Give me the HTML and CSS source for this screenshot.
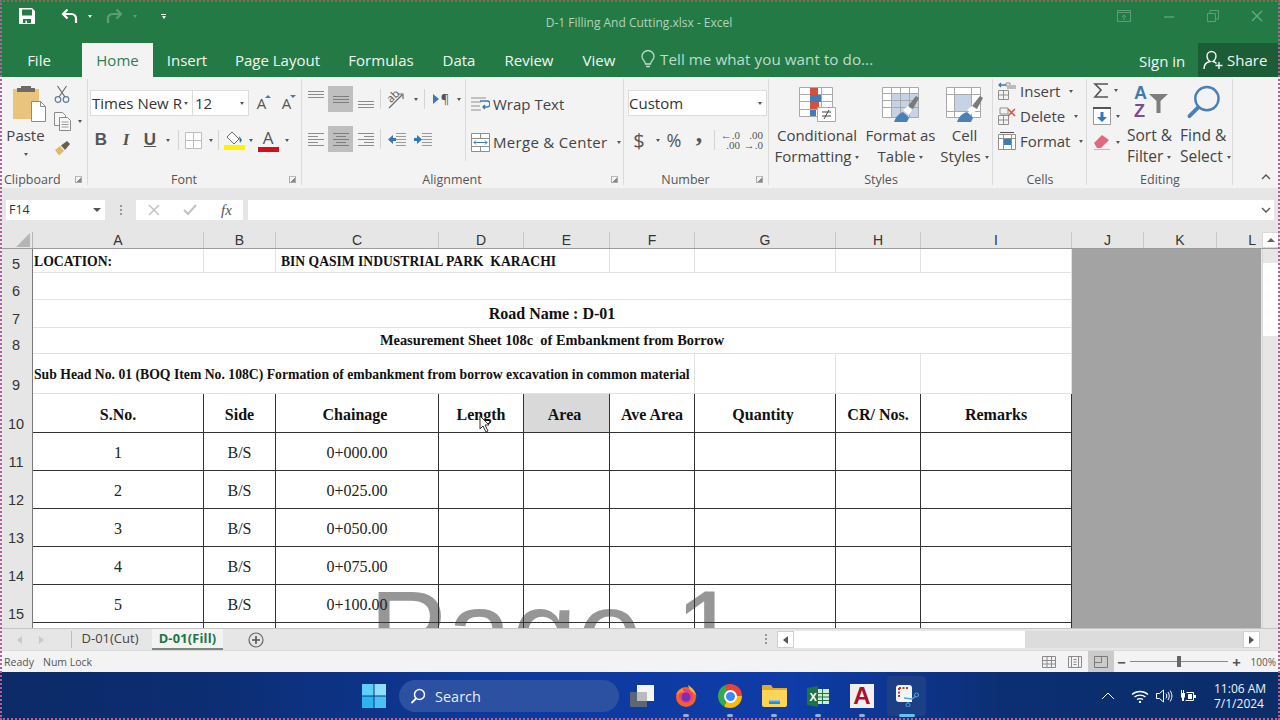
FILE: index.html
```html
<!DOCTYPE html>
<html lang="en">
<head>
<meta charset="utf-8">
<title>D-1 Filling And Cutting.xlsx - Excel</title>
<link rel="stylesheet" href="styles.css">
</head>
<body>
<div class="app">
  <header class="titlebar">
    <div class="qat">
      <svg class="i-save" width="18" height="18" viewBox="0 0 18 18"><path fill="#fff" fill-rule="evenodd" d="M1 1h13l3 3v13H1zM4 2.500v6h10v-6zM5 12v4h2.500v-2.500H9V16h4v-4z"/></svg>
      <svg class="i-undo" width="17" height="16" viewBox="0 0 17 16"><path fill="none" stroke="#fff" stroke-width="2.200" d="M6.500 1.500 2 6l4.500 4.500M2 6h8.500a4.500 4.500 0 0 1 4.500 4.500V15"/></svg>
      <span class="caret white c-undo"></span>
      <svg class="i-redo" width="17" height="16" viewBox="0 0 17 16"><path fill="none" stroke="#5c9e76" stroke-width="2.200" d="M10.500 1.500 15 6l-4.500 4.500M15 6H6.500A4.500 4.500 0 0 0 2 10.500V15"/></svg>
      <span class="caret dim c-redo"></span>
      <span class="qat-more"><span class="bar"></span><span class="caret white"></span></span>
    </div>
    <div class="doc-title">D-1 Filling And Cutting.xlsx - Excel</div>
    <div class="win-btns">
      <svg width="14" height="12" viewBox="0 0 14 12"><path fill="none" stroke="#5d9f77" d="M.5.500h13v11H.5zM.5 2.500h13M7 10V5M5 7l2-2 2 2"/></svg>
      <svg width="12" height="12" viewBox="0 0 12 12"><path stroke="#5d9f77" stroke-width="1.500" d="M1 7h10"/></svg>
      <svg width="12" height="12" viewBox="0 0 12 12"><path fill="none" stroke="#5d9f77" d="M.5 3.500h8v8h-8zM3 3V.5h8.500V9H9"/></svg>
      <svg width="12" height="12" viewBox="0 0 12 12"><path stroke="#6aa983" stroke-width="1.300" d="M1 1l10 10M11 1 1 11"/></svg>
    </div>
  </header>

  <nav class="tabbar">
    <span class="tab t-file">File</span>
    <span class="tab t-home">Home</span>
    <span class="tab t-insert">Insert</span>
    <span class="tab t-layout">Page Layout</span>
    <span class="tab t-formulas">Formulas</span>
    <span class="tab t-data">Data</span>
    <span class="tab t-review">Review</span>
    <span class="tab t-view">View</span>
    <span class="tell">
      <svg width="14" height="19" viewBox="0 0 14 19"><path fill="none" stroke="#bcdac8" stroke-width="1.300" d="M4.500 14c0-3-3.500-4-3.500-7.500a6 6 0 0 1 12 0C13 10 9.500 11 9.500 14zM5 16.500h4"/></svg>
      Tell me what you want to do...
    </span>
    <span class="signin">Sign in</span>
    <span class="share">
      <svg width="20" height="20" viewBox="0 0 20 20"><path fill="none" stroke="#fff" stroke-width="1.300" d="M1 19c0-5 3-7 6-7.500C4.500 10 4 8 4 6a4.500 4.500 0 0 1 9 0c0 2-1 4-3 5.500 1.500.3 2.500 1 3.500 2M16 12v7M12.500 15.500h7"/></svg>
      Share
    </span>
  </nav>

  <section class="ribbon">
    <div class="group g-clip">
      <div class="group-body">
        <div class="paste">
          <svg width="35" height="38" viewBox="0 0 35 38"><path fill="#e9c47c" d="M1 5h26v30H1z"/><path fill="#6f6a66" d="M9 2h10v2h4v4H5V4h4z"/><path fill="#fff" stroke="#8a8a8a" d="M19.500 17.500h9l5 5v15h-14z"/><path fill="none" stroke="#8a8a8a" d="M28.500 17.500v5h5"/></svg>
          <span class="big-label">Paste</span>
          <span class="caret"></span>
        </div>
        <div class="clip-tools">
          <svg width="16" height="18" viewBox="0 0 16 18"><g fill="none" stroke="#5c7d9c" stroke-width="1.200"><circle cx="4" cy="14.500" r="2.800"/><circle cx="12" cy="14.500" r="2.800"/></g><path stroke="#6b6b6b" stroke-width="1.200" d="M5 12 12.500 1M11 12 3.500 1"/></svg>
          <span class="copy-row"><svg width="17" height="19" viewBox="0 0 17 19"><g fill="#f7f7f7" stroke="#8a8a8a"><path d="M.5.500h8l3 3v10H.5z"/><path d="M5.500 5.500h8l3 3v10h-11z"/></g><path stroke="#9a9a9a" d="M7.500 10h7M7.500 12.500h7M7.500 15h7"/></svg><span class="caret"></span></span>
          <svg width="17" height="15" viewBox="0 0 17 15"><path fill="#e3b968" d="M1 9l5-4 4 5-5 4.500z"/><path fill="#6b5d4b" d="M7 4.500 13 0l3 3-5 6z"/></svg>
        </div>
      </div>
      <div class="group-label left">Clipboard<span class="launcher"></span></div>
    </div>

    <div class="group g-font">
      <div class="group-body col">
        <div class="row r1">
          <span class="field f-name">Times New R<span class="caret"></span></span>
          <span class="field f-size">12<span class="caret"></span></span>
          <span class="tool w25"><span class="grow-a">A<i class="up"></i></span></span>
          <span class="tool w25"><span class="grow-a small">A<i class="down"></i></span></span>
        </div>
        <div class="row r2">
          <span class="tool w22 fmt b">B</span>
          <span class="tool w28 fmt it">I</span>
          <span class="tool w20 fmt u">U</span>
          <span class="tool w16"><span class="caret"></span></span>
          <span class="sep"></span>
          <span class="tool w25"><svg width="17" height="17" viewBox="0 0 17 17"><path fill="#fff" stroke="#bdbdbd" d="M.5.500h16v16H.5zM8.500.500v16M.5 8.500h16"/></svg></span>
          <span class="tool w10"><span class="caret"></span></span>
          <span class="sep"></span>
          <span class="tool w26 stack"><svg width="20" height="14" viewBox="0 0 20 14"><path fill="#fff" stroke="#6b6b6b" d="M8 1l7 7-5 5-7-7z"/><path fill="#1f6fb0" d="M15 5l3 4-2 3z"/></svg><i class="swatch yellow"></i></span>
          <span class="tool w8"><span class="caret"></span></span>
          <span class="tool w26 stack"><span class="color-a">A</span><i class="swatch red"></i></span>
          <span class="tool w12"><span class="caret"></span></span>
        </div>
      </div>
      <div class="group-label off">Font<span class="launcher"></span></div>
    </div>

    <div class="group g-align">
      <div class="group-body">
        <div class="col align-col">
          <div class="row a1">
            <span class="tool w25"><svg width="16" height="22" viewBox="0 0 16 22"><path stroke="#8c8c8c" d="M0 3.500h16M0 6.500h16M0 9.500h16"/></svg></span>
            <span class="tool w25 on"><svg width="16" height="9" viewBox="0 0 16 9"><path stroke="#7d7d7d" d="M0 1.500h16M0 4.500h16M0 7.500h16"/></svg></span>
            <span class="tool w25"><svg width="16" height="22" viewBox="0 0 16 22"><path stroke="#8c8c8c" d="M0 13.500h16M0 16.500h16M0 19.500h16"/></svg></span>
            <span class="sep wide"></span>
            <span class="tool w26"><svg width="20" height="19" viewBox="0 0 20 19"><path fill="none" stroke="#6a6a6a" stroke-width="1.200" d="M2 18 15 5M11 4h5v5"/></svg><span class="ab">ab</span></span>
            <span class="tool w12"><span class="caret"></span></span>
            <span class="sep"></span>
            <span class="tool w26 pil"><svg width="10" height="10" viewBox="0 0 10 10"><path fill="#3f7ab0" d="M2 0l6 5-6 5z"/></svg>¶</span>
            <span class="tool w12"><span class="caret"></span></span>
          </div>
          <div class="row a2">
            <span class="tool w25"><svg width="16" height="13" viewBox="0 0 16 13"><path stroke="#8c8c8c" d="M0 .5h16M0 3.500h10M0 6.500h16M0 9.500h10M0 12.500h16"/></svg></span>
            <span class="tool w25 on"><svg width="16" height="13" viewBox="0 0 16 13"><path stroke="#7d7d7d" d="M0 .5h16M3 3.500h10M0 6.500h16M3 9.500h10M0 12.500h16"/></svg></span>
            <span class="tool w25"><svg width="16" height="13" viewBox="0 0 16 13"><path stroke="#8c8c8c" d="M0 .5h16M6 3.500h10M0 6.500h16M6 9.500h10M0 12.500h16"/></svg></span>
            <span class="sep wide"></span>
            <span class="tool w26"><svg width="18" height="13" viewBox="0 0 18 13"><path stroke="#9a9a9a" d="M8 .5h10M8 3.500h10M8 6.500h10M8 9.500h10M8 12.500h10"/><path fill="#2f78b8" d="M0 6.500 5 2v3h3v3H5v3z"/></svg></span>
            <span class="tool w26"><svg width="18" height="13" viewBox="0 0 18 13"><path stroke="#9a9a9a" d="M8 .5h10M8 3.500h10M8 6.500h10M8 9.500h10M8 12.500h10"/><path fill="#2f78b8" d="M8 6.500 3 2v3H0v3h3v3z"/></svg></span>
          </div>
        </div>
        <div class="col wrap-col">
          <div class="cmd"><svg width="19" height="15" viewBox="0 0 19 15"><path stroke="#8f8f8f" d="M0 1h15M0 5h10M0 9h9M0 13h10"/><path fill="none" stroke="#3f7ab0" stroke-width="1.500" d="M9 4h7a2.500 2.500 0 0 1 0 6h-4M14 8l-2 2 2 2"/></svg>Wrap Text</div>
          <div class="cmd merge"><svg width="19" height="19" viewBox="0 0 19 19"><path fill="#fff" stroke="#8f8f8f" d="M.5.500h18v18H.5zM.5 5.500h18M.5 13.500h18M9.500.5v5M9.500 13.500v5"/><path fill="none" stroke="#3f7ab0" d="M3 9.500h13M5 7.500l-2 2 2 2M14 7.500l2 2-2 2"/></svg>Merge &amp; Center<span class="caret"></span></div>
        </div>
      </div>
      <div class="group-label off">Alignment<span class="launcher"></span></div>
    </div>

    <div class="group g-num">
      <div class="group-body col">
        <div class="row r1"><span class="field f-num">Custom<span class="caret"></span></span></div>
        <div class="row r2 num-tools">
          <span class="tool w18 dollar">$</span>
          <span class="tool w20"><span class="caret"></span></span>
          <span class="tool w12 pct">%</span>
          <span class="tool w26 comma">,</span>
          <span class="sep"></span>
          <span class="dec"><i>←.0</i><i>.00</i></span>
          <span class="dec"><i>.00</i><i>→.0</i></span>
        </div>
      </div>
      <div class="group-label off">Number<span class="launcher"></span></div>
    </div>

    <div class="group g-styles">
      <div class="group-body">
        <div class="big b-cond">
          <svg width="39" height="37" viewBox="0 0 39 37"><path fill="#fff" stroke="#a9a9a9" d="M1.500 1.500h33v29h-33zM1.500 8.500h33M1.500 15.500h33M1.500 23.500h33M12.500 1.500v29M23.500 1.500v29"/><path fill="#d3503f" d="M12 2h8v7h-8zM12 16h9v7h-9z"/><path fill="#3f7db8" d="M12 9h11v7H12zM12 24h6v6h-6z"/><path fill="#fff" stroke="#a9a9a9" d="M19.500 21.500h18v14h-18z"/><path fill="none" stroke="#444" d="M24 26h9M24 30h9M31 24l-5 9"/></svg>
          <span class="big-label">Conditional</span>
          <span class="big-label">Formatting <span class="caret"></span></span>
        </div>
        <div class="big b-table">
          <svg width="39" height="37" viewBox="0 0 39 37"><path fill="#fff" stroke="#a9a9a9" d="M1.500 1.500h36v30h-36z"/><path fill="#c5d3e4" d="M10 7h27v24H10z"/><path fill="none" stroke="#a9a9a9" d="M1.500 7.500h36M1.500 14.500h36M1.500 21.500h36M10.500 1.500v30M19.500 1.500v30M28.500 1.500v30"/><path fill="#7a7a7a" d="M27 20 35 10l3 2-6 11z"/><path fill="#fff" d="M22 24l5-4 4 4-3 5z"/><path fill="#4a80b8" d="M13 36c2-6 6-9 9-10 2 2 5 4 6 6l-2 4z"/></svg>
          <span class="big-label">Format as</span>
          <span class="big-label">Table <span class="caret"></span></span>
        </div>
        <div class="big b-cell">
          <svg width="39" height="37" viewBox="0 0 39 37"><path fill="#fff" stroke="#a9a9a9" d="M1.500 1.500h34v30h-34z"/><path fill="#c5d3e4" d="M9 9h17v16H9z"/><path fill="none" stroke="#a9a9a9" d="M1.500 8.500h34M1.500 25.500h34M9.500 1.500v30M26.500 1.500v30"/><path fill="#7a7a7a" d="M27 20 35 10l3 2-6 11z"/><path fill="#fff" d="M22 24l5-4 4 4-3 5z"/><path fill="#4a80b8" d="M12 36c2-6 6-9 10-10 2 2 5 4 6 6l-2 4z"/></svg>
          <span class="big-label">Cell</span>
          <span class="big-label">Styles <span class="caret"></span></span>
        </div>
      </div>
      <div class="group-label">Styles</div>
    </div>

    <div class="group g-cells">
      <div class="group-body col cells-col">
        <div class="cmd cell-cmd"><svg width="18" height="18" viewBox="0 0 18 18"><path fill="none" stroke="#8f8f8f" d="M.5 8.500h10v9H.5zM5.500 8.500v9M.5 13h10M8 1h4v3H8z"/><path fill="#bcbcbc" d="M9 3h9v4H9z"/><path fill="none" stroke="#3f7ab0" stroke-width="1.300" d="M8 3H1M3 1 1 3l2 2"/></svg>Insert<span class="caret"></span></div>
        <div class="cmd cell-cmd"><svg width="18" height="18" viewBox="0 0 18 18"><path fill="none" stroke="#8f8f8f" d="M.5 8.500h10v9H.5zM5.500 8.500v9M.5 13h10M2 1h8v6H2z"/><path stroke="#d3503f" stroke-width="1.500" d="M10 2l7 7M17 2l-7 7"/></svg>Delete<span class="caret"></span></div>
        <div class="cmd cell-cmd"><svg width="18" height="18" viewBox="0 0 18 18"><path fill="#fff" stroke="#8f8f8f" d="M.5 2.500h17v15H.5zM.5 6.500h17M5.500 2.500v15M13.500 2.500v15"/><path fill="#3f7ab0" d="M6 7h7v6H6z"/><path stroke="#555" d="M2 .5h14"/></svg>Format<span class="caret"></span></div>
      </div>
      <div class="group-label">Cells</div>
    </div>

    <div class="group g-edit">
      <div class="group-body">
        <div class="col edit-col">
          <span class="edit-tool"><svg width="16" height="15" viewBox="0 0 16 15"><path fill="none" stroke="#555" stroke-width="1.600" d="M15 1H2l6 6-6 7h13"/></svg><span class="caret"></span></span>
          <span class="edit-tool"><svg width="18" height="18" viewBox="0 0 18 18"><path fill="#fff" stroke="#9a9a9a" d="M.5.500h17v17H.5z"/><path fill="#555" d="M0 0h18v2H0z"/><path fill="#2f78b8" d="M7.500 5h3v5H14l-5 5-5-5h3.500z"/></svg><span class="caret"></span></span>
          <span class="edit-tool"><svg width="18" height="16" viewBox="0 0 18 16"><path fill="#e0697f" d="M1 9l8-8 7 5-8 8H4z"/><path stroke="#bcbcbc" d="M1 15.500h16"/></svg><span class="caret"></span></span>
        </div>
        <div class="big b-sort">
          <svg width="36" height="34" viewBox="0 0 36 34"><text class="svgtxt az" x="1" y="14" fill="#3f7ab0">A</text><text class="svgtxt az" x="1" y="32" fill="#7a4b9a">Z</text><path fill="#7d7d7d" d="M16 9h19l-7.500 7v12h-4V16z"/></svg>
          <span class="big-label">Sort &amp;</span>
          <span class="big-label">Filter <span class="caret"></span></span>
        </div>
        <div class="big b-find">
          <svg width="36" height="35" viewBox="0 0 36 35"><circle cx="21" cy="14" r="12" fill="none" stroke="#4a80b8" stroke-width="2.500"/><path stroke="#4a80b8" stroke-width="4" stroke-linecap="round" d="M12 23 3 32"/></svg>
          <span class="big-label">Find &amp;</span>
          <span class="big-label">Select <span class="caret"></span></span>
        </div>
      </div>
      <div class="group-label">Editing</div>
    </div>
    <div class="collapse"><svg width="10" height="6" viewBox="0 0 10 6"><path fill="none" stroke="#555" stroke-width="1.400" d="M1 5l4-4 4 4"/></svg></div>
  </section>

  <section class="formula">
    <div class="namebox">F14<span class="caret dark"></span></div>
    <div class="fdots"></div>
    <div class="fxbox">
      <svg width="12" height="12" viewBox="0 0 12 12"><path stroke="#c2c2c2" stroke-width="1.500" d="M1 1l10 10M11 1 1 11"/></svg>
      <svg width="14" height="12" viewBox="0 0 14 12"><path fill="none" stroke="#c2c2c2" stroke-width="2" d="M1 6l4 4 8-9"/></svg>
      <span class="fx">fx</span>
    </div>
    <div class="finput"><svg width="10" height="6" viewBox="0 0 10 6"><path fill="none" stroke="#555" stroke-width="1.400" d="M1 1l4 4 4-4"/></svg></div>
  </section>

  <div class="colheads">
    <span class="corner"><i></i></span>
    <span class="ch w-a">A</span><span class="ch w-b">B</span><span class="ch w-c">C</span><span class="ch w-d">D</span><span class="ch w-e">E</span><span class="ch w-f">F</span><span class="ch w-g">G</span><span class="ch w-h">H</span><span class="ch w-i">I</span><span class="ch w-j">J</span><span class="ch w-k">K</span><span class="ch w-l">L</span>
    <span class="sb-up"><i></i></span>
  </div>

  <main class="sheet">
    <div class="pagearea">
      <div class="watermark">Page 1</div>
      <div class="grid">
        <div class="rn">5</div><div class="c t13">LOCATION:</div><div class="c"></div><div class="c s3 t13 ind">BIN QASIM INDUSTRIAL PARK  KARACHI</div><div class="c"></div><div class="c"></div><div class="c"></div><div class="c"></div>
        <div class="rn">6</div><div class="c s9"></div>
        <div class="rn">7</div><div class="c s9 ctr t16">Road Name : D-01</div>
        <div class="rn">8</div><div class="c s9 ctr t14">Measurement Sheet 108c  of Embankment from Borrow</div>
        <div class="rn">9</div><div class="c s6 t13">Sub Head No. 01 (BOQ Item No. 108C) Formation of embankment from borrow excavation in common material</div><div class="c"></div><div class="c"></div><div class="c"></div>

        <div class="rn">10</div><div class="d h">S.No.</div><div class="d h">Side</div><div class="d h ch-l">Chainage</div><div class="d h">Length</div><div class="d h shade ch-l">Area</div><div class="d h">Ave Area</div><div class="d h ch-l">Quantity</div><div class="d h">CR/ Nos.</div><div class="d h">Remarks</div>
        <div class="rn">11</div><div class="d">1</div><div class="d">B/S</div><div class="d">0+000.00</div><div class="d"></div><div class="d"></div><div class="d"></div><div class="d"></div><div class="d"></div><div class="d"></div>
        <div class="rn">12</div><div class="d">2</div><div class="d">B/S</div><div class="d">0+025.00</div><div class="d"></div><div class="d"></div><div class="d"></div><div class="d"></div><div class="d"></div><div class="d"></div>
        <div class="rn">13</div><div class="d">3</div><div class="d">B/S</div><div class="d">0+050.00</div><div class="d"></div><div class="d"></div><div class="d"></div><div class="d"></div><div class="d"></div><div class="d"></div>
        <div class="rn">14</div><div class="d">4</div><div class="d">B/S</div><div class="d">0+075.00</div><div class="d"></div><div class="d"></div><div class="d"></div><div class="d"></div><div class="d"></div><div class="d"></div>
        <div class="rn">15</div><div class="d">5</div><div class="d">B/S</div><div class="d">0+100.00</div><div class="d"></div><div class="d"></div><div class="d"></div><div class="d"></div><div class="d"></div><div class="d"></div>
        <div class="rn"></div><div class="d"></div><div class="d"></div><div class="d"></div><div class="d"></div><div class="d"></div><div class="d"></div><div class="d"></div><div class="d"></div><div class="d"></div>
      </div>
    </div>
    <div class="graypane"></div>
    <div class="vscroll"><div class="vthumb"></div></div>
    <svg class="cursor" width="13" height="18" viewBox="0 0 13 18"><path fill="#fff" stroke="#333" d="M1 1v13l3-3 3 6 2-1-3-6h4z"/></svg>
  </main>

  <div class="sheettabs">
    <span class="nav-arrows"><i class="al"></i><i class="ar"></i></span>
    <span class="stab">D-01(Cut)</span>
    <span class="stab active">D-01(Fill)</span>
    <svg class="addtab" width="16" height="16" viewBox="0 0 16 16"><circle cx="8" cy="8" r="7" fill="none" stroke="#666" stroke-width="1.200"/><path stroke="#555" stroke-width="1.600" d="M4 8h8M8 4v8"/></svg>
    <span class="hdots"></span>
    <div class="hscroll"><span class="hb"><i class="al dark"></i></span><span class="hthumb"></span><span class="hb end"><i class="ar dark"></i></span></div>
  </div>

  <footer class="status">
    <span class="st-ready">Ready</span><span>Num Lock</span>
    <div class="st-right">
      <span class="vw"><svg width="14" height="12" viewBox="0 0 14 12"><path fill="none" stroke="#8a8a8a" d="M.5.500h13v11H.5zM.5 4.500h13M.5 8h13M5 .5v11M9.500.5v11"/></svg></span>
      <span class="vw"><svg width="14" height="12" viewBox="0 0 14 12"><path fill="none" stroke="#8a8a8a" d="M.5.500h13v11H.5zM3.500.5v11M10.500.5v11M5.500 3.500h3M5.500 6h3M5.500 8.500h3"/></svg></span>
      <span class="vw on"><svg width="14" height="12" viewBox="0 0 14 12"><path fill="none" stroke="#7a7a7a" d="M.5.500h13v11H.5zM7.500.5v6h-7"/></svg></span>
      <span class="zm">−</span>
      <span class="slider"><i></i></span>
      <span class="zm plus">+</span>
      <span class="zoomv">100%</span>
    </div>
  </footer>

  <div class="taskbar">
    <svg class="winlogo" width="24" height="24" viewBox="0 0 24 24"><path fill="#5ed0f5" d="M0 0h11.500v11.500H0z"/><path fill="#8ee0f8" d="M12.500 0H24v11.500H12.500z"/><path fill="#2bb4ee" d="M0 12.500h11.500V24H0z"/><path fill="#49c4f2" d="M12.500 12.500H24V24H12.500z"/></svg>
    <div class="search">
      <svg width="16" height="16" viewBox="0 0 16 16"><circle cx="9.500" cy="6.500" r="5" fill="none" stroke="#fff" stroke-width="1.500"/><path stroke="#fff" stroke-width="1.800" d="M6 10.500 1.500 15"/></svg>
      Search
    </div>
    <span class="tk tk-view"><svg width="24" height="22" viewBox="0 0 24 22"><path fill="#5d6675" d="M0 8a1 1 0 0 1 1-1h16v15H1a1 1 0 0 1-1-1z"/><path fill="#f5f5f5" d="M7 0h17v16H7z"/><path fill="#b9bbbe" d="M7 7h10v9H7z"/></svg></span>
    <span class="tk"><svg width="22" height="22" viewBox="0 0 22 22"><circle cx="11" cy="12" r="10" fill="#f2632c"/><circle cx="11" cy="11" r="7" fill="#ee3f78"/><circle cx="11" cy="12" r="4.500" fill="#7b2fb8"/><path fill="#ffb325" d="M13 0c5 3 8 7 8.500 12-1-3-3-5-5.500-6-1-2-2.500-3-3-6z"/><path fill="#ff8a20" d="M1 10C2 6 5 4 8 3c-1 2 0 3 2 4-3 0-6 1-9 3z"/></svg></span>
    <span class="tk"><span class="chrome"><span class="chrome-in"></span></span></span>
    <span class="tk"><svg width="25" height="22" viewBox="0 0 25 22"><path fill="#e3a92a" d="M0 1a1 1 0 0 1 1-1h8l2 3h14v4H0z"/><path fill="#fcd558" d="M0 5h25v15a2 2 0 0 1-2 2H2a2 2 0 0 1-2-2z"/><path fill="#2b8ac9" d="M7 15h11v4H7z"/><path fill="#7fc4ea" d="M7 15h11v1.500H7z"/></svg></span>
    <span class="tk"><svg width="22" height="21" viewBox="0 0 22 21"><path fill="#cfe8d8" d="M9 3h13v15H9z"/><path stroke="#1f7244" d="M9 7.500h13M9 11h13M9 14.500h13M15.500 3v15"/><path fill="#1f7244" d="M0 2l11-2v21L0 19z"/><text class="svgtxt xl" x="2.500" y="14.500" fill="#fff">X</text></svg></span>
    <span class="tk"><span class="acad">A</span></span>
    <span class="tk tk-snip"><svg width="24" height="22" viewBox="0 0 24 22"><path fill="#f5f5f5" d="M1 3a3 3 0 0 1 3-3h10a3 3 0 0 1 3 3v14H4a3 3 0 0 1-3-3z"/><path fill="none" stroke="#c0392b" stroke-width="2" stroke-dasharray="2 1.500" d="M4 3h9M4 3v10"/><path fill="none" stroke="#4ea3d8" stroke-width="1.300" d="M9 13l8 1 4-3M13 17v1"/><circle cx="21.500" cy="10" r="2" fill="none" stroke="#4ea3d8"/><circle cx="13" cy="20" r="2" fill="none" stroke="#4ea3d8"/></svg><i class="run"></i></span>
    <div class="tray">
      <svg class="chev" width="14" height="8" viewBox="0 0 14 8"><path fill="none" stroke="#fff" d="M1 7l6-6 6 6"/></svg>
      <svg width="18" height="13" viewBox="0 0 18 13"><path fill="none" stroke="#fff" stroke-width="1.300" d="M1 4.500c4.500-4 11.500-4 16 0M3.500 7c3-2.500 8-2.500 11 0M6 9.500c1.500-1 4.500-1 6 0"/><circle cx="9" cy="12" r="1.200" fill="#fff"/></svg>
      <svg width="17" height="14" viewBox="0 0 17 14"><path fill="none" stroke="#fff" d="M.5 4.500h3L7.500 1v12l-4-3.500h-3zM10 4.500c1 1.500 1 3.500 0 5M12 3c1.700 2.500 1.700 5.500 0 8M14 1.500c2.500 3.500 2.500 7.500 0 11"/></svg>
      <svg width="16" height="13" viewBox="0 0 16 13"><path fill="#fff" d="M1 0h1v3h1V0h1v3h1v3a2 2 0 0 1-1 2v3H2V8a2 2 0 0 1-1-2z"/><path fill="none" stroke="#fff" d="M6.500 2.500h7v8h-8"/><path fill="#fff" d="M8 4h4v5H8zM14 5h2v3h-2z"/></svg>
    </div>
    <div class="clock"><span>11:06 AM</span><span>7/1/2024</span></div>
  </div>
  <div class="frame"></div>
</div>
</body>
</html>
```
FILE: styles.css
```css
*{box-sizing:border-box}
html,body{margin:0;padding:0}
body{width:1280px;height:720px;overflow:hidden;font-family:"Open Sans","Noto Sans",sans-serif;color:#444}
i{font-style:normal}
.app{position:relative;width:1280px;height:720px;display:flex;flex-direction:column;background:#e6e6e6;overflow:hidden}
.caret{display:inline-block;width:0;height:0;border-left:2.5px solid transparent;border-right:2.5px solid transparent;border-top:3px solid #555;vertical-align:middle}
.caret.white{border-top-color:#fff}
.caret.dim{border-top-color:#5c9e76}
.caret.dark{border-left-width:4px;border-right-width:4px;border-top-width:4px}

.titlebar{height:43px;background:#247a45;display:flex;position:relative;flex:none}
.qat{display:flex;align-items:center;height:32px;padding-left:18px}
.i-undo{margin-left:25px}
.c-undo{margin-left:10px}
.i-redo{margin-left:14px}
.c-redo{margin-left:10px}
.qat-more{margin-left:24px;display:flex;flex-direction:column;gap:1px;align-items:center}
.bar{width:5px;height:1px;background:#fff}
.doc-title{position:absolute;left:0;right:0;top:15px;text-align:center;font-size:12px;line-height:16px;color:#b0d4bc;padding-right:2px}
.win-btns{margin-left:auto;display:flex;align-items:center;height:32px;gap:32px;padding-right:17px}

.tabbar{height:34px;background:#247a45;display:flex;flex:none;position:relative;font-size:15px;color:#fff}
.tab{height:34px;line-height:35px;color:#f2f7f4;flex:none;text-align:center}
.t-file{width:78px}
.t-home{width:71px;margin-left:4px;background:#f3f3f3;color:#2f7d52}
.t-insert{width:68px}
.t-layout{width:115px;margin-left:-1px}
.t-formulas{width:92px}
.t-data{width:62px;margin-left:1px}
.t-review{width:78px}
.t-view{width:62px}
.tell{margin-left:11px;display:flex;align-items:center;gap:5px;color:#bfdccb;font-size:15.2px;height:32px;width:498px;flex:none;letter-spacing:.05px}
.signin{color:#f2f7f4;font-size:15px;line-height:36px;width:59px;flex:none}
.share{flex:none;width:82px;background:#1c5c36;color:#f2f7f4;display:flex;align-items:center;gap:4px;padding-left:5px;font-size:15px;height:34px}

.ribbon{height:111px;background:#f3f3f3;display:flex;flex:none;font-size:15px;color:#444;position:relative}
.group{position:relative;display:flex;flex-direction:column;flex:none;height:108px}
.group::after{content:"";position:absolute;right:0;top:2px;bottom:0;width:1px;background:#dadada}
.group-body{height:94px;display:flex;flex:none}
.group-body.col,.col{display:flex;flex-direction:column}
.group-label{height:17px;line-height:17px;font-size:12.5px;text-align:center;color:#555;position:relative}
.group-label.left{text-align:left;padding-left:4px}
.group-label.off{padding-right:22px}
.launcher{position:absolute;right:6px;top:5px;width:7px;height:7px;border:1px solid #aaa;border-top-color:#bbb;background:linear-gradient(135deg,transparent 55%,#888 55%)}
.g-clip{width:88px}
.g-font{width:214px}
.g-align{width:322px}
.g-num{width:145px}
.g-styles{width:224px}
.g-cells{width:94px}
.g-edit{width:146px}
.paste{width:50px;display:flex;flex-direction:column;align-items:center;padding:7px 0 0 8px}
.paste .big-label{margin-top:3px;margin-right:7px}
.paste .caret{margin-top:7px;margin-right:7px}
.big-label{line-height:21px;white-space:nowrap;text-align:center;display:block;font-size:15px}
.clip-tools{display:flex;flex-direction:column;margin-left:4px;padding-top:8px;gap:9px;align-items:flex-start}
.clip-tools>svg:last-child{margin-top:1px}
.copy-row{display:flex;align-items:center;gap:7px}

.row{display:flex;align-items:center}
.r1{height:26px;margin-top:13px;padding-left:2px}
.r2{height:30px;margin-top:9px;padding-left:2px}
.tool{display:flex;align-items:center;justify-content:center;flex:none;height:26px;position:relative}
.w8{width:8px}.w10{width:10px}.w12{width:12px}.w16{width:16px}.w18{width:18px}.w20{width:20px}.w22{width:22px}.w25{width:25px}.w26{width:26px}.w28{width:28px}
.field{position:relative;height:26px;background:#fff;border:1px solid #dcdcdc;display:flex;align-items:center;padding-left:1px;flex:none;font-size:15px;color:#333;white-space:nowrap}
.field .caret{position:absolute;right:4px;top:11px}
.f-name{width:103px;overflow:hidden}
.f-size{width:57px;padding-left:2px;margin-left:-1px}
.f-num{width:139px;padding-left:0;margin-left:2px;font-size:15px}
.grow-a{font-size:15px;color:#555;position:relative}
.up,.down{position:absolute;right:-5px;top:2px;width:0;height:0;border-left:3px solid transparent;border-right:3px solid transparent}
.up{border-bottom:3px solid #3f7ab0}
.down{border-top:3px solid #3f7ab0}
.fmt{font-family:"Liberation Sans",sans-serif;font-size:17px;color:#555}
.b{font-weight:700}
.it{font-style:italic;font-family:"Liberation Serif",serif;font-weight:700}
.u{text-decoration:underline;font-weight:700}
.sep{flex:none;width:1px;height:20px;background:#d4d4d4;margin:0 2px}
.sep.wide{margin:0 3px 0 2px}
.stack{flex-direction:column;gap:0;height:26px}
.swatch{display:block;width:21px;height:5px}
.yellow{background:#fff200}
.red{background:#d3101a}
.color-a{font-size:17px;line-height:19px;color:#555}
.align-col{width:163px;padding-left:1px;flex:none}
.a1{height:26px;margin-top:9px}
.a2{height:26px;margin-top:14px}
.on{background:#bfbfbf}
.ab{position:absolute;left:2px;top:2px;font-size:11px;transform:rotate(-45deg);color:#555}
.pil{font-size:13px;color:#555}
.wrap-col{padding:14px 0 0 5px;gap:16px;border-left:1px solid #dadada;height:82px;margin-top:2px}
.cmd{display:flex;align-items:center;gap:3px;height:22px;white-space:nowrap;font-size:15px;color:#444}
.merge{letter-spacing:.3px}
.wrap-col .caret{margin-left:6px}
.num-tools{padding-left:6px}
.dollar{font-size:20px;color:#555}
.pct{font-size:18px;color:#555}
.comma{font-size:26px;font-weight:700;color:#555;line-height:10px;padding-bottom:12px;margin-left:6px;font-family:"Liberation Serif",serif}
.dec{display:flex;flex-direction:column;font-family:"Liberation Serif",serif;font-size:11px;line-height:10px;width:23px;text-align:right;color:#555}
.big{width:75px;display:flex;flex-direction:column;align-items:center;padding-top:9px}
.big svg{margin-bottom:2px;flex:none}
.b-cond{width:96px}
.b-table{width:71px}
.b-cell{width:57px}
.cells-col{padding-top:3px;padding-left:5px;gap:3px}
.cell-cmd{height:22px;gap:4px}
.cell-cmd .caret{margin-left:5px}
.edit-col{width:40px;padding:6px 0 0 6px;gap:9px}
.edit-tool{display:flex;align-items:center;gap:5px}
.b-sort{width:53px;align-items:flex-start;padding-top:8px}
.b-find{width:48px;align-items:flex-start;padding-top:8px}
.b-sort svg{margin-left:6px;height:34px;margin-bottom:6px}
.b-find svg{margin-left:6px;height:34px;margin-bottom:6px}
.g-edit .big-label{font-size:15.5px}
.svgtxt{font-family:"Liberation Sans",sans-serif;font-weight:700}
.az{font-size:18px}
.xl{font-size:11px}
.collapse{position:absolute;left:1261px;top:97px;line-height:0}

.formula{height:44px;padding-top:12px;display:flex;flex:none;align-items:flex-start;background:#e6e6e6}
.namebox{margin-left:6px;width:99px;height:20px;background:#fff;font-size:12.5px;line-height:20px;padding-left:3px;color:#333;position:relative;flex:none}
.namebox .caret{position:absolute;right:4px;top:8px}
.fdots{width:2px;height:11px;margin:5px 14px 0 15px;background:repeating-linear-gradient(#999 0 2px,transparent 2px 4px);flex:none}
.fxbox{width:107px;height:20px;background:#fff;display:flex;align-items:center;gap:23px;padding-left:12px;flex:none}
.fx{font-family:"Liberation Serif",serif;font-style:italic;font-size:15px;color:#555;margin-left:1px}
.finput{margin-left:5px;width:1026px;height:20px;background:#fff;display:flex;align-items:center;justify-content:flex-end;padding-right:3px;flex:none}

.colheads{height:16px;display:flex;flex:none;background:#e6e6e6;position:relative}
.corner{width:33px;flex:none;position:relative;border-right:1px solid #b5b5b5}
.corner i{position:absolute;right:2px;bottom:1px;width:0;height:0;border-style:solid;border-width:0 0 14px 14px;border-color:transparent transparent #b5b5b5 transparent}
.ch{flex:none;text-align:center;font:14px/16px "Liberation Sans",sans-serif;color:#333;border-right:1px solid #c8c8c8;height:16px}
.w-a{width:171px}.w-b{width:72px}.w-c{width:163px}.w-d{width:85px}.w-e{width:86px}.w-f{width:85px}.w-g{width:141px}.w-h{width:85px}.w-i{width:151px}.w-j{width:72px}.w-k{width:73px}
.w-l{width:45px;border-right:0;text-align:right;padding-right:6px}
.sb-up{width:17px;height:16px;background:#fff;border:1px solid #d8d8d8;display:flex;align-items:center;justify-content:center;flex:none}
.sb-up i{width:0;height:0;border-left:4px solid transparent;border-right:4px solid transparent;border-bottom:4px solid #666}

.sheet{height:380px;display:flex;flex:none;position:relative;border-top:1px solid #9c9c9c;overflow:hidden}
.pagearea{position:relative;width:1072px;flex:none;background:linear-gradient(90deg,#e6e6e6 33px,#fff 33px);overflow:hidden}
.watermark{position:absolute;left:369px;top:333px;font:117px/100px "Liberation Sans",sans-serif;color:#969696;white-space:nowrap}
.grid{position:relative;display:grid;grid-template-columns:33px 171px 72px 163px 85px 86px 85px 141px 85px 151px;grid-template-rows:24px 27px 28px 26px 40px 39px 38px 38px 38px 38px 38px 5px;height:379px;font-family:"Liberation Serif",serif;color:#111}
.rn{font:14.5px/16px "Liberation Sans",sans-serif;color:#333;background:#e6e6e6;border-right:1px solid #7a7a7a;display:flex;align-items:flex-end;justify-content:center;padding-bottom:1px}
.c{border-right:1px solid #e2e2e2;border-bottom:1px solid #e2e2e2;display:flex;align-items:center;padding-left:1px;white-space:pre;min-width:0}
.s3{grid-column:span 3}
.s6{grid-column:span 6}
.s9{grid-column:span 9}
.t13{font-size:13.7px;font-weight:700;padding-top:2px}
.t14{font-size:14.4px;font-weight:700}
.t16{font-size:16px;font-weight:700}
.ind{padding-left:5px;font-size:13.6px}
.ctr{justify-content:center;padding-left:0}
.d{border-right:1px solid #333;border-bottom:1px solid #333;display:flex;align-items:center;justify-content:center;font-size:16px;white-space:pre;padding-top:2px;color:#222}
.h{font-weight:700;padding-top:3px;color:#111}
.ch-l{padding-right:4px}
.shade{background:#d9d9d9}
.grid>.d:nth-last-child(-n+9){border-bottom:0}
.graypane{width:190px;flex:none;background:#a3a3a3;border-left:1px solid #4a3fa0;margin-left:-1px;margin-right:1px}
.vscroll{width:17px;flex:none;background:#e6e6e6;padding-top:14px;display:flex;flex-direction:column;border-left:1px solid #d8d8d8}
.vthumb{height:73px;background:#fff}
.cursor{position:absolute;left:479px;top:166px}

.sheettabs{height:22px;display:flex;align-items:stretch;flex:none;position:relative;background:#e6e6e6;border-top:1px solid #c4c4c4}
.nav-arrows{width:72px;display:flex;align-items:center;gap:17px;padding-left:17px;flex:none;border-right:1px solid #bdbdbd;margin:2px 0}
.al,.ar{display:block;width:0;height:0;border-top:4px solid transparent;border-bottom:4px solid transparent}
.al{border-right:5px solid #c9c9c9}
.ar{border-left:5px solid #c9c9c9}
.al.dark{border-right-color:#555}
.ar.dark{border-left-color:#555}
.stab{flex:none;width:80px;font-size:13px;line-height:18px;text-align:center;color:#444;padding-right:4px}
.stab.active{width:71px;background:#f3f3f3;color:#217346;font-weight:700;border-bottom:2px solid #7a8a7f;font-size:12.8px;letter-spacing:.2px;padding:0}
.addtab{margin:3px 0 0 25px;flex:none}
.hdots{width:2px;height:11px;margin:5px 0 0 501px;background:repeating-linear-gradient(#999 0 2px,transparent 2px 4px);flex:none}
.hscroll{margin:2px 0 0 10px;width:483px;height:17px;display:flex;background:#dcdcdc;flex:none}
.hb{width:17px;height:17px;background:#fff;border:1px solid #d0d0d0;display:flex;align-items:center;justify-content:center;flex:none}
.hb.end{margin-left:auto}
.hthumb{width:231px;background:#fff;flex:none}

.status{height:22px;background:#f3f3f3;display:flex;align-items:center;flex:none;font-size:10.5px;color:#555;padding-left:4px;border-top:1px solid #d8d8d8}
.st-ready{width:39px}
.st-right{margin-left:auto;display:flex;align-items:center;height:21px;padding-right:4px}
.vw{display:flex;align-items:center;justify-content:center;width:26px;height:21px}
.vw.on{background:#cbcbcb}
.zm{width:16px;text-align:center;font-size:15px;font-weight:700;line-height:16px}
.zm.plus{margin-left:1px}
.slider{position:relative;width:98px;height:1px;background:#888}
.slider i{position:absolute;left:47px;top:-5px;width:4px;height:11px;background:#666}
.zoomv{margin-left:6px;font-size:10px}

.taskbar{height:48px;flex:none;position:relative;display:flex;align-items:center;padding-left:362px;background:linear-gradient(90deg,#0c2a66 0,#0c2e74 18%,#0e3a9e 40%,#0e3ca8 62%,#0c2f74 78%,#0b2d68 100%);color:#fff}
.winlogo{flex:none}
.search{flex:none;margin-left:13px;width:220px;height:32px;border-radius:16px;background:#2c50a2;display:flex;align-items:center;gap:9px;padding-left:11px;font-size:14.5px;color:#e8eefa}
.tk{position:relative;flex:none;width:44px;height:40px;display:flex;align-items:center;justify-content:center}
.tk::after{content:"";position:absolute;left:19px;bottom:-1px;width:6px;height:3px;border-radius:2px;background:#8fb0dc}
.tk-view{margin-left:1px}
.tk-view::after{display:none}
.tk-snip{background:#1d3f86;border-radius:4px;width:39px;margin-left:3px}
.tk-snip::after{display:none}
.run{position:absolute;bottom:-1px;left:12px;width:16px;height:3px;border-radius:2px;background:#5fc4f2}
.chrome{width:24px;height:24px;border-radius:50%;background:conic-gradient(from 330deg,#ea4335 0 120deg,#fbbc05 120deg 240deg,#34a853 240deg 360deg);display:flex;align-items:center;justify-content:center}
.chrome-in{border-radius:50%;background:#4285f4;border:2px solid #fff;box-sizing:content-box;width:9px;height:9px}
.acad{width:24px;height:24px;background:#f1eeee;color:#a5122a;font:700 24px/24px "Liberation Sans",sans-serif;text-align:center}
.tray{margin-left:175px;display:flex;align-items:center;gap:7px;flex:none}
.chev{margin-right:9px}
.clock{margin-left:18px;width:50px;flex:none;display:flex;flex-direction:column;align-items:flex-start;font-size:12px;line-height:15px;color:#f0f4fb;white-space:nowrap}
.frame{position:absolute;inset:0;border:2px dotted #b2629a;border-top-color:#8a6a50;pointer-events:none}
```
